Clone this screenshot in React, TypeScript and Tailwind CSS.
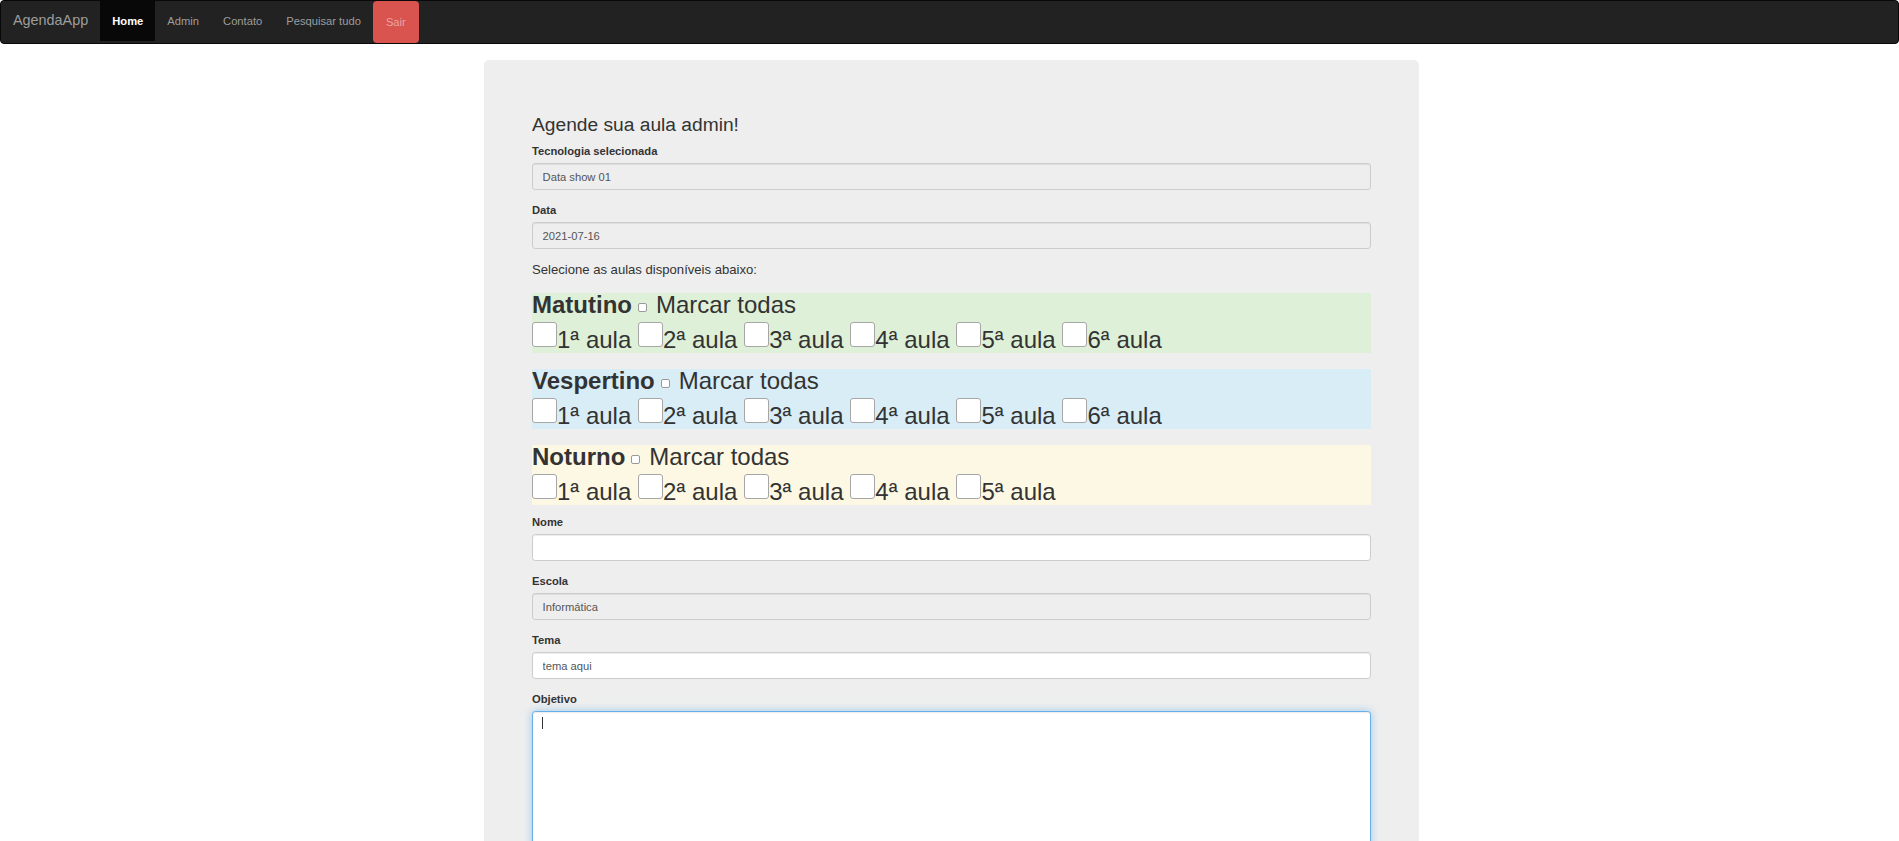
import React from 'react';

interface Periodo {
  nome: string;
  cor: string;
  aulas: number;
}

const periodos: Periodo[] = [
  { nome: 'Matutino', cor: 'bg-[#dff0d8]', aulas: 6 },
  { nome: 'Vespertino', cor: 'bg-[#d9edf7]', aulas: 6 },
  { nome: 'Noturno', cor: 'bg-[#fcf8e3]', aulas: 5 },
];

const navLinks = ['Admin', 'Contato', 'Pesquisar tudo'];

const inputBase =
  'block w-full h-[27.2px] rounded-[3.2px] border border-[#ccc] px-[9.6px] text-[11.2px] text-[#555] shadow-[inset_0_1px_1px_rgba(0,0,0,0.075)] outline-none';

const Campo: React.FC<{ label: string; value?: string; disabled?: boolean }> = ({ label, value, disabled }) => (
  <div className="mb-[12px]">
    <label className="block text-[11.2px] font-bold leading-[16px] mb-[4px]">{label}</label>
    <input
      type="text"
      readOnly
      value={value || ''}
      className={`${inputBase} ${disabled ? 'bg-[#eee]' : 'bg-white'}`}
    />
  </div>
);

export default function App() {
  return (
    <div className="min-h-screen bg-white text-[#333] font-['Liberation_Sans',Arial,sans-serif]">
      {/* Navbar */}
      <nav className="h-[44px] flex items-start bg-[#222] border border-[#080808] rounded-[4px]">
        <a className="h-[40px] flex items-center px-[12px] text-[14.4px] text-[#9d9d9d]">AgendaApp</a>
        <a className="h-[40px] flex items-center px-[12px] text-[11.2px] font-bold text-white bg-[#080808]">Home</a>
        {navLinks.map((l) => (
          <a key={l} className="h-[40px] flex items-center px-[12px] text-[11.2px] text-[#9d9d9d]">
            {l}
          </a>
        ))}
        <button className="h-[42px] px-[13px] pt-[1px] rounded-[4px] bg-[#d9534f] text-[11.2px] text-[#eba5a3]">
          Sair
        </button>
      </nav>

      {/* Jumbotron */}
      <div className="ml-[484px] mt-[16px] w-[935px] rounded-[5px] bg-[#eee] px-[48px] pt-[38px] pb-[48px]">
        <h3 className="mt-[16px] mb-[8px] text-[19.2px] leading-[1.1]">Agende sua aula admin!</h3>

        <Campo label="Tecnologia selecionada" value="Data show 01" disabled />
        <Campo label="Data" value="2021-07-16" disabled />

        <p className="text-[13.1px] leading-[18.3px] mb-[13px]">Selecione as aulas disponíveis abaixo:</p>

        <div className="flex flex-col gap-[16px]">
          {periodos.map((p) => (
            <div key={p.nome} className={`${p.cor} text-[24px]`}>
              <div className="h-[24px] leading-[24px] whitespace-nowrap">
                <b>{p.nome}</b>
                <span className="inline-block w-[9px] h-[9px] ml-[6px] mr-[9px] align-[1px] rounded-[2px] border border-[#999] bg-white" />
                Marcar todas
              </div>
              <div className="flex items-end gap-[6.8px] pt-[5px] pb-[1px]">
                {Array.from({ length: p.aulas }).map((_, i) => (
                  <label key={i} className="flex items-end">
                    <span className="block w-[25px] h-[25px] mb-[5px] rounded-[3px] border border-[#a6a6a6] bg-white" />
                    <span className="leading-[24px] whitespace-nowrap">{i + 1}ª aula</span>
                  </label>
                ))}
              </div>
            </div>
          ))}
        </div>

        <div className="mt-[9px]">
          <Campo label="Nome" />
          <Campo label="Escola" value="Informática" disabled />
          <Campo label="Tema" value="tema aqui" />

          <div className="mb-[12px]">
            <label className="block text-[11.2px] font-bold leading-[16px] mb-[4px]">Objetivo</label>
            <div className="relative">
              <textarea
                className="block w-full h-[200px] resize-none rounded-[3.2px] border border-[#66afe9] bg-white px-[9.6px] py-[5px] text-[11.2px] text-[#555] outline-none shadow-[inset_0_1px_1px_rgba(0,0,0,0.075),0_0_8px_rgba(102,175,233,0.6)]"
              />
              <span className="absolute left-[10px] top-[6px] w-[1px] h-[12px] bg-[#333]" />
            </div>
          </div>
        </div>
      </div>
    </div>
  );
}
